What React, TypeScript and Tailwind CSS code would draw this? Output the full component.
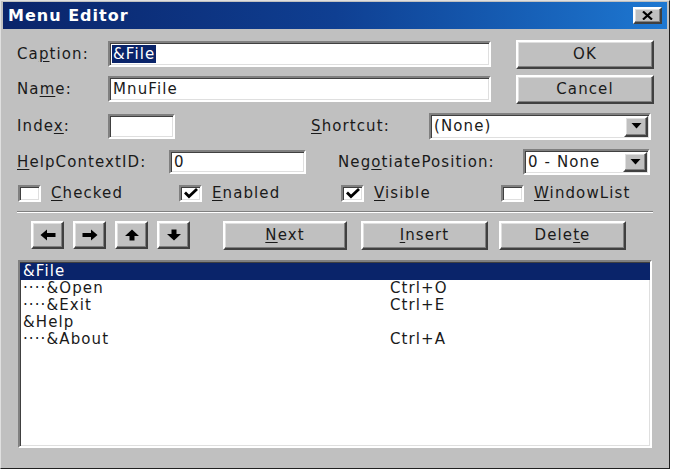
import React from "react"

const sunken =
  "bg-white border-2 border-t-[#808080] border-l-[#808080] border-b-white border-r-white shadow-[inset_1px_1px_0_#404040,inset_-1px_-1px_0_#dfdfdf]"
const raised =
  "bg-[#c0c0c0] border-2 border-t-white border-l-white border-b-[#404040] border-r-[#404040] shadow-[inset_-1px_-1px_0_#808080,inset_1px_1px_0_#dfdfdf]"

function Key({ children }: { children: React.ReactNode }) {
  return <span className="underline underline-offset-2 decoration-1">{children}</span>
}

function DropButton() {
  return (
    <div className={`${raised} w-[24px] h-full flex items-center justify-center`}>
      <svg width="11" height="6" viewBox="0 0 11 6">
        <path d="M0.5 0 L10.5 0 L5.5 5.5 Z" fill="#000" />
      </svg>
    </div>
  )
}

function Check({ checked }: { checked?: boolean }) {
  return (
    <div className={`${sunken} w-[23px] h-[17px] flex items-center justify-center`}>
      {checked && (
        <svg width="14" height="11" viewBox="0 0 14 11">
          <path d="M1 4.5 L5 8.5 L13 1" stroke="#000" strokeWidth="2.8" fill="none" />
        </svg>
      )}
    </div>
  )
}

function Arrow({ dir }: { dir: "left" | "right" | "up" | "down" }) {
  const paths: Record<string, string> = {
    left: "M0.5 6 L7 0.5 L7 4 L15.5 4 L15.5 8 L7 8 L7 11.5 Z",
    right: "M15.5 6 L9 0.5 L9 4 L0.5 4 L0.5 8 L9 8 L9 11.5 Z",
    up: "M8 0.5 L15 7 L10.5 7 L10.5 11.5 L5.5 11.5 L5.5 7 L1 7 Z",
    down: "M8 11.5 L15 5 L10.5 5 L10.5 0.5 L5.5 0.5 L5.5 5 L1 5 Z",
  }
  return (
    <div className={`${raised} w-[33px] h-[28px] flex items-center justify-center`}>
      <svg width="16" height="12" viewBox="0 0 16 12">
        <path d={paths[dir]} fill="#000" />
      </svg>
    </div>
  )
}

const rows = [
  { text: "&File", shortcut: "", selected: true },
  { text: "····&Open", shortcut: "Ctrl+O" },
  { text: "····&Exit", shortcut: "Ctrl+E" },
  { text: "&Help", shortcut: "" },
  { text: "····&About", shortcut: "Ctrl+A" },
]

export default function App() {
  return (
    <div className="w-[678px] h-[471px] bg-white font-['DejaVu_Sans',sans-serif] text-[15px] tracking-[1.1px] text-[#1a1a1a]">
      <div className="w-[670px] h-[469px] bg-[#c0c0c0] border border-t-[#e0e0e0] border-l-[#e0e0e0] border-b-[#202020] border-r-[#202020] px-[2px] pt-[1px] flex flex-col">
        {/* title bar */}
        <div className="h-[27px] bg-gradient-to-r from-[#0a246a] via-[#0f3f92] to-[#1e78d2] flex items-center justify-between pl-[5px] pr-[5px]">
          <span className="text-white font-bold text-[16px] tracking-[1px] leading-none">Menu Editor</span>
          <div className={`${raised} w-[29px] h-[17px] flex items-center justify-center`}>
            <svg width="11" height="9" viewBox="0 0 11 9">
              <path d="M1 0.5 L10 8.5 M10 0.5 L1 8.5" stroke="#000" strokeWidth="2.2" />
            </svg>
          </div>
        </div>

        <div className="pl-[14px] flex flex-col">
          {/* caption */}
          <div className="mt-[11px] h-[28px] flex items-center">
            <span className="w-[91px]">
              Ca<Key>p</Key>tion:
            </span>
            <div className={`${sunken} w-[383px] h-[26px] flex items-center pl-[2px]`}>
              <span className="bg-[#0a246a] text-white px-[1px] leading-[18px]">&amp;File</span>
            </div>
            <div className={`${raised} ml-[25px] w-[138px] h-[29px] flex items-center justify-center`}>OK</div>
          </div>

          {/* name */}
          <div className="mt-[7px] h-[28px] flex items-center">
            <span className="w-[91px]">
              Na<Key>m</Key>e:
            </span>
            <div className={`${sunken} w-[383px] h-[26px] flex items-center pl-[3px]`}>MnuFile</div>
            <div className={`${raised} ml-[25px] w-[138px] h-[29px] flex items-center justify-center`}>Cancel</div>
          </div>

          {/* index / shortcut */}
          <div className="mt-[10px] h-[26px] flex items-center">
            <span className="w-[91px]">
              Inde<Key>x</Key>:
            </span>
            <div className={`${sunken} w-[67px] h-[25px]`} />
            <span className="ml-[136px] w-[118px]">
              <Key>S</Key>hortcut:
            </span>
            <div className={`${sunken} w-[222px] h-[27px] flex items-center justify-between pl-[3px] pr-[1px] py-[1px]`}>
              <span>(None)</span>
              <DropButton />
            </div>
          </div>

          {/* help context / negotiate */}
          <div className="mt-[10px] h-[26px] flex items-center">
            <span className="w-[152px]">
              <Key>H</Key>elpContextID:
            </span>
            <div className={`${sunken} w-[137px] h-[24px] flex items-center pl-[3px]`}>0</div>
            <span className="ml-[32px] w-[185px]">
              Neg<Key>o</Key>tiatePosition:
            </span>
            <div className={`${sunken} w-[127px] h-[26px] flex items-center justify-between pl-[3px] pr-[1px] py-[1px]`}>
              <span>0 - None</span>
              <DropButton />
            </div>
          </div>

          {/* checkboxes */}
          <div className="mt-[9px] h-[18px] flex items-center pl-[1px]">
            <div className="w-[161px] flex items-center gap-[10px]">
              <Check />
              <span>
                <Key>C</Key>hecked
              </span>
            </div>
            <div className="w-[162px] flex items-center gap-[10px]">
              <Check checked />
              <span>
                <Key>E</Key>nabled
              </span>
            </div>
            <div className="w-[160px] flex items-center gap-[10px]">
              <Check checked />
              <span>
                <Key>V</Key>isible
              </span>
            </div>
            <div className="flex items-center gap-[10px]">
              <Check />
              <span>
                <Key>W</Key>indowList
              </span>
            </div>
          </div>

          {/* separator */}
          <div className="mt-[9px] w-[636px] h-[2px] border-t border-t-[#808080] border-b border-b-white" />

          {/* buttons */}
          <div className="mt-[7px] h-[30px] flex items-center">
            <div className="ml-[14px] flex gap-[9px]">
              <Arrow dir="left" />
              <Arrow dir="right" />
              <Arrow dir="up" />
              <Arrow dir="down" />
            </div>
            <div
              className={`${raised} ml-[33px] w-[124px] h-[29px] flex items-center justify-center shadow-[0_0_0_1px_#000,inset_-1px_-1px_0_#808080,inset_1px_1px_0_#dfdfdf]`}
            >
              <span>
                <Key>N</Key>ext
              </span>
            </div>
            <div className={`${raised} ml-[14px] w-[127px] h-[29px] flex items-center justify-center`}>
              <span>
                <Key>I</Key>nsert
              </span>
            </div>
            <div className={`${raised} ml-[11px] w-[127px] h-[29px] flex items-center justify-center`}>
              <span>
                Dele<Key>t</Key>e
              </span>
            </div>
          </div>

          {/* list */}
          <div className={`${sunken} mt-[10px] ml-[1px] w-[634px] h-[188px] flex flex-col pt-[1px]`}>
            {rows.map((r) => (
              <div
                key={r.text}
                className={`h-[17px] flex items-center pl-[3px] leading-none ${
                  r.selected ? "bg-[#0a246a] text-white" : ""
                }`}
              >
                <span className="w-[367px] shrink-0">{r.text}</span>
                <span>{r.shortcut}</span>
              </div>
            ))}
          </div>
        </div>
      </div>
    </div>
  )
}
